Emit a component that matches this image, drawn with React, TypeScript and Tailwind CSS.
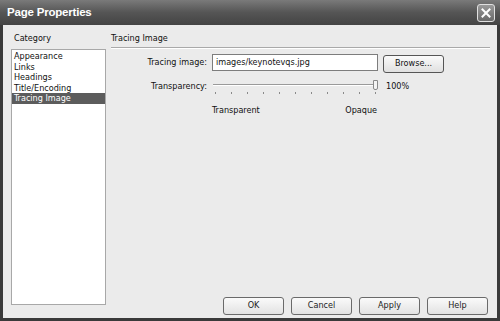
import React from "react";

const font = { fontFamily: '"DejaVu Sans Condensed", "DejaVu Sans", sans-serif' };

function Btn({ label, w }: { label: string; w: string }) {
  return (
    <div
      className={`${w} h-[18px] flex items-center justify-center rounded-[3px] border border-[#6a6a6a] bg-gradient-to-b from-[#fafafa] to-[#e2e2e2] text-[#222]`}
    >
      {label}
    </div>
  );
}

export default function App() {
  const ticks = Array.from({ length: 11 }, (_, i) => i);
  return (
    <div className="w-[500px] h-[321px] bg-[#3a3a3a] flex flex-col" style={font}>
      {/* Title bar */}
      <div className="h-[25px] flex items-center justify-between pl-[7px] pr-[5px] bg-gradient-to-b from-[#7a7a7a] via-[#555] to-[#444]">
        <span
          className="text-white font-bold text-[11.5px] tracking-[-0.2px]"
          style={{ fontFamily: '"Liberation Sans", Arial, sans-serif' }}
        >
          Page Properties
        </span>
        <div className="w-[18px] h-[18px] rounded-[3px] border border-[#e0e0e0] bg-gradient-to-b from-[#9a9a9a] to-[#6a6a6a] flex items-center justify-center">
          <svg width="10" height="10" viewBox="0 0 10 10">
            <path d="M1.5 1.5 L8.5 8.5 M8.5 1.5 L1.5 8.5" stroke="white" strokeWidth="2" strokeLinecap="square" />
          </svg>
        </div>
      </div>
      {/* Body */}
      <div className="flex-1 mx-[3px] mb-[3px] bg-[#ebebeb] flex pl-[8px] pr-[7px] pt-[7px] pb-[3px] text-[9px] text-[#111]">
        {/* Category column */}
        <div className="w-[95px] flex flex-col">
          <div className="h-[12px] pl-[3px] leading-[12px]">Category</div>
          <div className="mt-[5px] flex-1 mb-[10px] bg-white border border-[#a8a8a8] pt-[1px] flex flex-col">
            {["Appearance", "Links", "Headings", "Title/Encoding"].map((c) => (
              <div key={c} className="h-[10.5px] leading-[10.5px] pl-[2px]">{c}</div>
            ))}
            <div className="h-[11px] leading-[11px] pl-[2px] bg-[#5c5c5c] text-white">Tracing Image</div>
          </div>
        </div>
        {/* Right panel */}
        <div className="flex-1 flex flex-col ml-[5px]">
          <div className="h-[12px] leading-[12px]">Tracing Image</div>
          <div className="mt-[3px] h-[1px] bg-[#a9a9a9] border-b border-white box-content" />
          <div className="mt-[5px] flex items-start">
            <div className="w-[101px] text-right pr-[5px] h-[17px] leading-[17px]">Tracing image:</div>
            <div className="w-[166px] h-[17px] bg-white border border-[#7d7d7d] flex items-center pl-[3px]">images/keynotevqs.jpg</div>
            <div className="ml-[5px] mt-[1px] w-[61px] h-[18px] flex items-center justify-center rounded-[3px] border border-[#555] bg-gradient-to-b from-[#fafafa] to-[#e0e0e0]">Browse...</div>
          </div>
          <div className="mt-[8px] flex items-start">
            <div className="w-[101px] text-right pr-[5px] h-[12px] leading-[12px] mt-[-1px]">Transparency:</div>
            <div className="w-[166px] relative h-[16px]">
              <div className="absolute left-[1px] right-[2px] top-[3px] h-[2px] border-t border-[#9a9a9a] border-b border-b-white" />
              <div className="absolute right-[0px] top-[-1px] w-[5px] h-[10px] bg-[#f4f4f4] border border-[#8a8a8a] rounded-b-[2px]" />
              <div className="absolute left-[3px] right-[2px] top-[11px] flex justify-between">
                {ticks.map((t) => (
                  <div key={t} className="w-[1px] h-[2px] bg-[#8a8a8a]" />
                ))}
              </div>
            </div>
            <div className="ml-[8px] mt-[-1px] leading-[12px]">100%</div>
          </div>
          <div className="mt-[7px] flex">
            <div className="w-[101px]" />
            <div className="w-[166px] flex justify-between pr-[1px] h-[12px] leading-[12px]">
              <span>Transparent</span>
              <span>Opaque</span>
            </div>
          </div>
          <div className="flex-1" />
          <div className="flex justify-end gap-[7px] mr-[2px]">
            <Btn label="OK" w="w-[61px]" />
            <Btn label="Cancel" w="w-[61px]" />
            <Btn label="Apply" w="w-[61px]" />
            <Btn label="Help" w="w-[61px]" />
          </div>
        </div>
      </div>
    </div>
  );
}
